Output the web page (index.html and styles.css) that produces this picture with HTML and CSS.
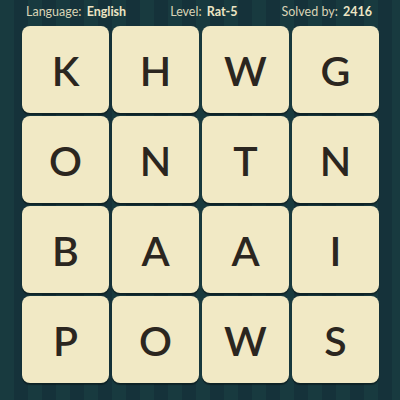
FILE: index.html
```html
<!DOCTYPE html>
<html>
<head>
<meta charset="utf-8">
<link rel="stylesheet" href="styles.css">
</head>
<body>
<div class="page">
  <header class="info">
    <span class="item">Language: <b>English</b></span>
    <span class="item">Level: <b>Rat-5</b></span>
    <span class="item">Solved by: <b>2416</b></span>
  </header>
  <div class="board">
    <div class="tile">K</div><div class="tile">H</div><div class="tile">W</div><div class="tile">G</div>
    <div class="tile">O</div><div class="tile">N</div><div class="tile">T</div><div class="tile">N</div>
    <div class="tile">B</div><div class="tile">A</div><div class="tile">A</div><div class="tile">I</div>
    <div class="tile">P</div><div class="tile">O</div><div class="tile">W</div><div class="tile">S</div>
  </div>
</div>
</body>
</html>
```
FILE: styles.css
```css
html, body {
  margin: 0;
  padding: 0;
}
body {
  width: 400px;
  height: 400px;
  overflow: hidden;
  background-color: #173438;
  background-image: repeating-linear-gradient(90deg, #183a3f 0px, #183a3f 14px, #15323a 14px, #15323a 28px);
  font-family: Lato, "Open Sans", sans-serif;
}
.page {
  width: 400px;
  height: 400px;
  display: flex;
  flex-direction: column;
}
.info {
  height: 25px;
  display: flex;
  justify-content: space-between;
  align-items: center;
  padding: 0 28px 1px 26px;
  color: #d9d4b6;
  font-size: 12.5px;
  line-height: 1;
}
.info b {
  font-weight: 700;
  color: #ece5c4;
  margin-left: 2px;
}
.board {
  margin-left: 22px;
  display: grid;
  grid-template-columns: repeat(4, 87px);
  grid-template-rows: repeat(4, 87px);
  gap: 3px;
}
.tile {
  background: #f1e9c5;
  border-radius: 8px;
  box-shadow: 0 1px 0 #0e2326, 0 2px 1px rgba(0,0,0,0.35);
  display: flex;
  align-items: center;
  justify-content: center;
  font-size: 41px;
  font-weight: 600;
  color: #2b2620;
  padding-top: 1px;
}
```
